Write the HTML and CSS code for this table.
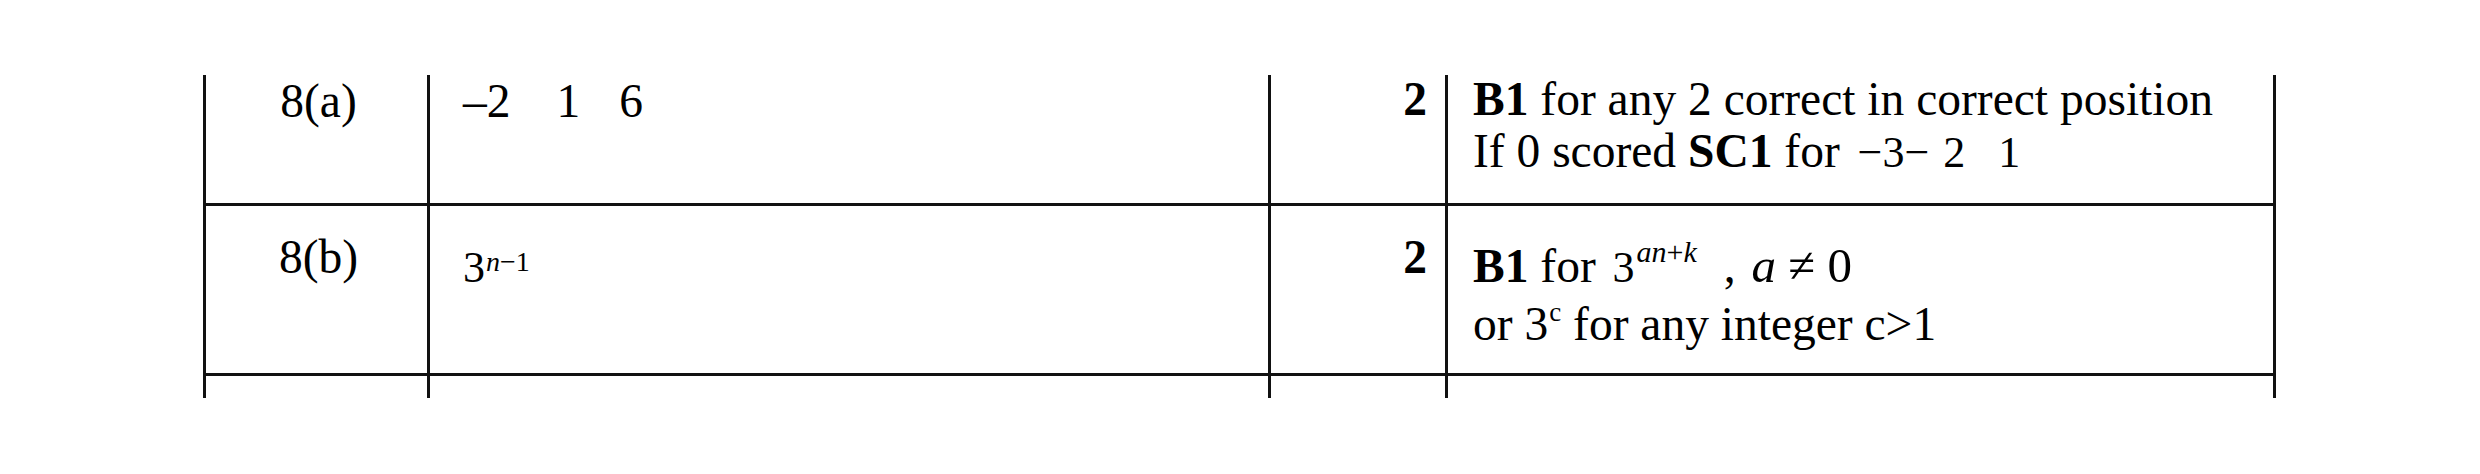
FILE: index.html
```html
<!DOCTYPE html>
<html>
<head>
<meta charset="utf-8">
<link rel="stylesheet" href="styles.css">
</head>
<body>
<div class="sheet">
  <div class="grid">
    <div class="cell num r1">8(a)</div>
    <div class="cell ans r1">–2<span class="g g1"></span>1<span class="g g2"></span>6</div>
    <div class="cell mark r1"><div class="lift">2</div></div>
    <div class="cell note r1">
      <div class="lift">
        <div><b>B1</b> for any 2 correct in correct position</div>
        <div>If 0 scored <b>SC1</b> for <span class="eq e1">−3−<span class="g g4"></span>2<span class="g g5"></span>1</span></div>
      </div>
    </div>

    <div class="cell num r2">8(b)</div>
    <div class="cell ans r2 low"><span class="eq">3<sup class="s1"><i>n</i>−1</sup></span></div>
    <div class="cell mark r2">2</div>
    <div class="cell note r2 low">
      <div><b>B1</b> for <span class="eq e2">3<sup class="s2"><i>an</i>+<i>k</i></sup></span><span class="g g3"></span>, <span class="cond"><i class="ai">a</i> ≠ 0</span></div>
      <div class="second">or 3<sup class="s3">c</sup> for any integer c&gt;1</div>
    </div>

    <div class="cell"></div>
    <div class="cell"></div>
    <div class="cell"></div>
    <div class="cell"></div>
  </div>
</div>
</body>
</html>
```
FILE: styles.css
```css
html, body {
  margin: 0;
  padding: 0;
  background: #ffffff;
}

.sheet {
  padding-top: 75px;
  padding-left: 203px;
}

.grid {
  box-sizing: border-box;
  width: 2073px;
  display: grid;
  grid-template-columns: 221px 838px 174px 825px;
  grid-template-rows: 128px 167px 22px;
  gap: 3px;
  padding: 0 3px;
  background: #111111;
}

.cell {
  background: #ffffff;
  font-family: "Liberation Serif", "Times New Roman", serif;
  font-size: 47.5px;
  line-height: 52px;
  color: #000000;
  white-space: nowrap;
}

.num {
  text-align: center;
  padding-left: 4px;
}

.ans {
  padding-left: 33px;
}

.mark {
  text-align: right;
  padding-right: 18px;
  font-weight: bold;
}

.note {
  padding-left: 25px;
}

.r2 {
  padding-top: 25px;
}

.r2.low {
  padding-top: 34px;
}

.lift {
  margin-top: -2px;
}

.second {
  margin-top: 6px;
}

.g {
  display: inline-block;
}

.g1 { width: 46px; }
.g2 { width: 39px; }
.g3 { width: 27px; }
.g4 { width: 14px; }
.g5 { width: 33px; }

.eq {
  font-size: 44px;
  line-height: 0;
}

.e1 {
  margin-left: 6px;
}

.e2 {
  margin-left: 5px;
}

sup {
  line-height: 0;
}

.s1 {
  font-size: 28px;
  vertical-align: 11px;
  margin-left: 1px;
}

.s2 {
  font-size: 30px;
  vertical-align: 20px;
  margin-left: 2px;
}

.s3 {
  font-size: 27px;
  vertical-align: 19px;
  margin-left: 1px;
}

.cond {
  font-size: 49px;
  line-height: 0;
}

.ai {
  margin-left: 4px;
}
```
